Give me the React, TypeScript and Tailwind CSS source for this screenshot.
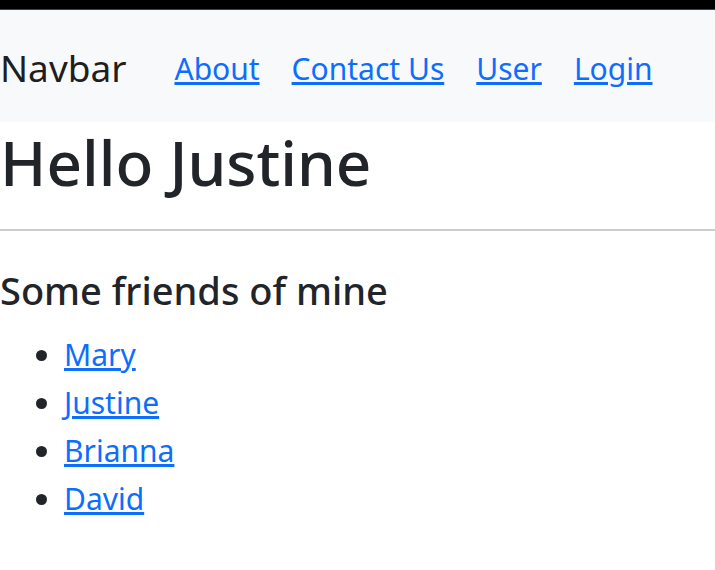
export default function App() {
  const links = ['About', 'Contact Us', 'User', 'Login'];
  const friends = ['Mary', 'Justine', 'Brianna', 'David'];

  return (
    <div className="min-h-screen bg-white font-['Noto_Sans',sans-serif] text-[#212529]">
      <div className="h-[9px] bg-black" />
      <div className="h-px bg-[#3d4247]" />

      {/* navbar */}
      <nav className="flex h-[112px] items-center bg-[#f8f9fa] pt-[4px]">
        <a className="mr-[32px] text-[37px] text-black/90">Navbar</a>
        {links.map((l) => (
          <a key={l} href="#" className="px-[16px] text-[30px] text-[#0d6efd] underline">
            {l}
          </a>
        ))}
      </nav>

      <h1 className="pt-[3px] text-[62px] font-medium leading-[1.2]">Hello Justine</h1>
      <hr className="mt-[30px] border-t-2 border-[#cdcdcd]" />

      <h2 className="mt-[37px] text-[38px] font-medium leading-[1.2]">Some friends of mine</h2>
      <ul className="mt-[17px] list-disc pl-[64px] text-[30px] leading-[48px]">
        {friends.map((f) => (
          <li key={f}>
            <a href="#" className="text-[#0d6efd] underline">{f}</a>
          </li>
        ))}
      </ul>
    </div>
  );
}
